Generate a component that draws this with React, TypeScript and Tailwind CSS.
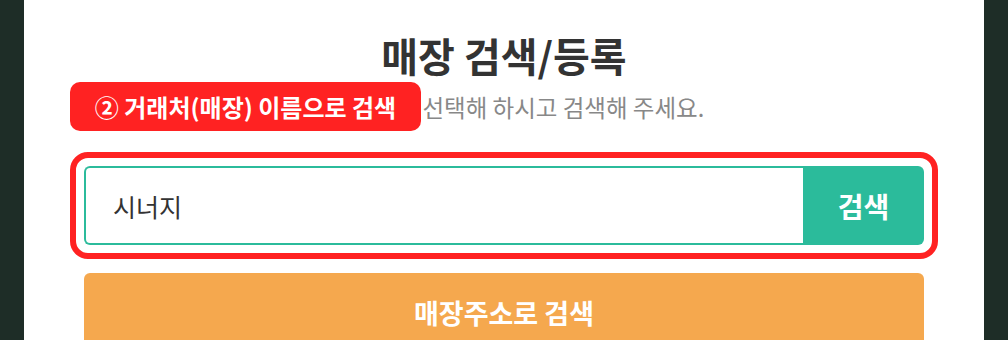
export default function App() {
  return (
    <div
      className="flex h-[340px] w-full justify-center overflow-hidden bg-[#1e2d27]"
      style={{ fontFamily: '"Noto Sans CJK KR", "Noto Sans", sans-serif' }}
    >
      <main className="h-full w-[960px] bg-white px-[60px] pt-[28px]">
        <h1 className="text-center text-[40px] font-bold leading-[54px] text-[#333]">
          매장 검색/등록
        </h1>

        <div className="relative h-[50px]">
          <p className="text-center text-[23.5px] leading-[50px] text-[#888]">
            검색 방법을 선택해 하시고 검색해 주세요.
          </p>
          <span className="absolute left-[-14px] top-0 flex h-[49px] w-[351px] items-center justify-center rounded-[10px] bg-[#ff2222] text-[24px] font-bold text-white">
            ② 거래처(매장) 이름으로 검색
          </span>
        </div>

        <div className="relative mt-[34px] flex h-[79px]">
          <input
            defaultValue="시너지"
            className="h-full flex-1 rounded-l-[6px] border-2 border-r-0 border-[#2bbb9b] bg-white pl-[27px] text-[25px] text-[#333] outline-none"
          />
          <button className="h-full w-[121px] rounded-r-[6px] bg-[#2bbb9b] text-[28px] font-bold text-white">
            검색
          </button>
          <div className="pointer-events-none absolute -inset-[14px] rounded-[18px] border-[6px] border-[#ff2222]" />
        </div>

        <button className="mt-[28px] flex h-[80px] w-full items-center justify-center rounded-[6px] bg-[#f5a84e] text-[27px] font-bold text-white">
          매장주소로 검색
        </button>
      </main>
    </div>
  );
}
